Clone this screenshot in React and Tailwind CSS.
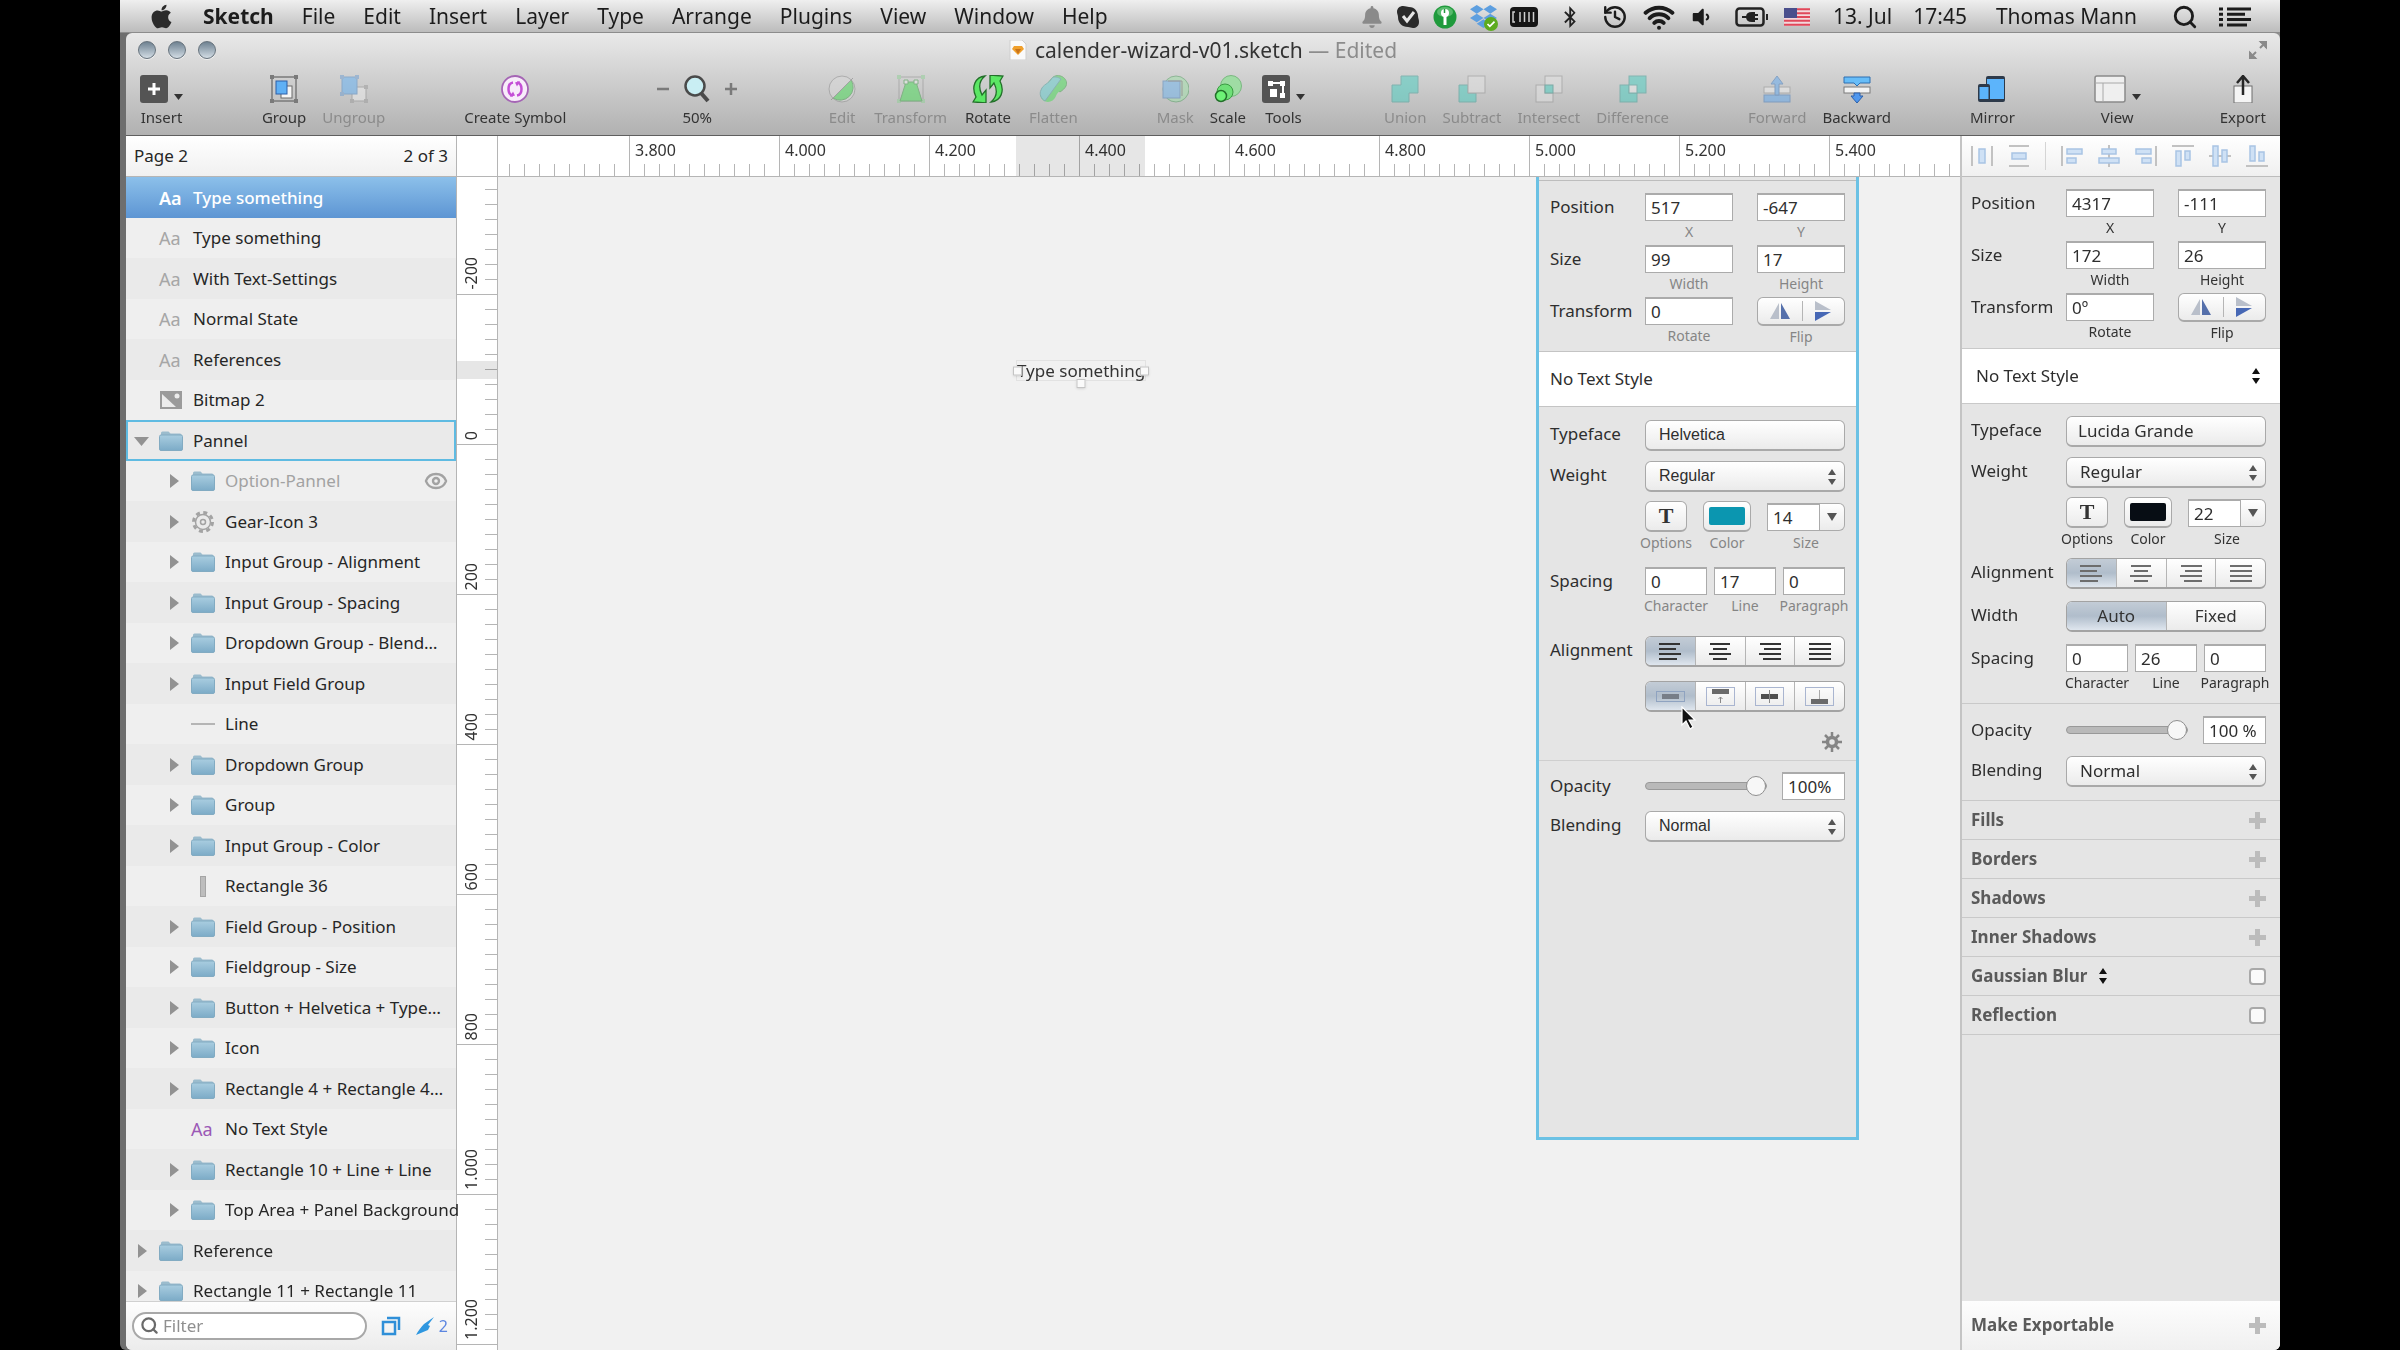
import React from 'react';
import { FaApple, FaBell, FaBluetoothB, FaDropbox, FaVolumeDown } from 'react-icons/fa';
import { Eye, History, Search, Wifi } from 'lucide-react';

const MENUS = ['File', 'Edit', 'Insert', 'Layer', 'Type', 'Arrange', 'Plugins', 'View', 'Window', 'Help'];

const LAYERS = [
    { name: 'Type something', icon: 'text', selected: true },
    { name: 'Type something', icon: 'text' },
    { name: 'With Text-Settings', icon: 'text' },
    { name: 'Normal State', icon: 'text' },
    { name: 'References', icon: 'text' },
    { name: 'Bitmap 2', icon: 'bitmap' },
    { name: 'Pannel', icon: 'folder', arrow: 'down', outlined: true },
    { name: 'Option-Pannel', icon: 'folder', arrow: 'right', nested: true, hidden: true },
    { name: 'Gear-Icon 3', icon: 'gear', arrow: 'right', nested: true },
    { name: 'Input Group - Alignment', icon: 'folder', arrow: 'right', nested: true },
    { name: 'Input Group - Spacing', icon: 'folder', arrow: 'right', nested: true },
    { name: 'Dropdown Group - Blend…', icon: 'folder', arrow: 'right', nested: true },
    { name: 'Input Field Group', icon: 'folder', arrow: 'right', nested: true },
    { name: 'Line', icon: 'line', nested: true },
    { name: 'Dropdown Group', icon: 'folder', arrow: 'right', nested: true },
    { name: 'Group', icon: 'folder', arrow: 'right', nested: true },
    { name: 'Input Group - Color', icon: 'folder', arrow: 'right', nested: true },
    { name: 'Rectangle 36', icon: 'rect', nested: true },
    { name: 'Field Group - Position', icon: 'folder', arrow: 'right', nested: true },
    { name: 'Fieldgroup - Size', icon: 'folder', arrow: 'right', nested: true },
    { name: 'Button + Helvetica + Type…', icon: 'folder', arrow: 'right', nested: true },
    { name: 'Icon', icon: 'folder', arrow: 'right', nested: true },
    { name: 'Rectangle 4 + Rectangle 4…', icon: 'folder', arrow: 'right', nested: true },
    { name: 'No Text Style', icon: 'shared', nested: true },
    { name: 'Rectangle 10 + Line + Line', icon: 'folder', arrow: 'right', nested: true },
    { name: 'Top Area + Panel Background', icon: 'folder', arrow: 'right', nested: true },
    { name: 'Reference', icon: 'folder', arrow: 'right' },
    { name: 'Rectangle 11 + Rectangle 11', icon: 'folder', arrow: 'right' },
];

const H_MARKS = ['3.800', '4.000', '4.200', '4.400', '4.600', '4.800', '5.000', '5.200', '5.400'];
const V_MARKS = ['0', '200', '400', '600', '800', '1.000', '1.200'];

/* ---------- menu bar ---------- */

function MenuBar() {
    return (
        <nav className="flex h-[33px] shrink-0 items-center justify-between border-b border-[#8c8c8c] bg-linear-to-b from-[#efefef] to-[#bcbcbc] pt-px pr-[29px] pl-[28px] text-[21px] text-[#1c1c1c]">
            <div className="flex items-center gap-7">
                <button type="button" aria-label="Apple">
                    <FaApple className="size-[27px] text-[#2b2b2b]" />
                </button>
                <button type="button" className="font-bold">Sketch</button>
                {MENUS.map((menu) => (
                    <button key={menu} type="button">{menu}</button>
                ))}
            </div>
            <div className="flex items-center gap-[15px]">
                <div className="flex items-center gap-[13px]">
                    <FaBell className="size-[22px] text-[#8a8a8a]" />
                    <svg viewBox="0 0 24 24" className="size-[24px]">
                        <path d="M7 1c3 0 4 1 6 1 6 0 9 5 9 9 0 2 1 3 1 6 0 4-3 6-6 6-2 0-3-1-5-1-6 0-10-4-10-10 0-2-1-3-1-5 0-4 3-6 6-6z" fill="#2a2a2a" />
                        <path d="M7 11l4 5 7-9" fill="none" stroke="#e5e5e5" strokeWidth="3" />
                    </svg>
                    <svg viewBox="0 0 24 24" className="size-[24px]">
                        <circle cx="12" cy="12" r="11.5" fill="#1f9a3c" />
                        <ellipse cx="12" cy="7" rx="8" ry="5" fill="#7fd08c" opacity=".6" />
                        <circle cx="12" cy="8" r="4" fill="#fff" />
                        <path d="M10.500 10h3v10h-3z" fill="#fff" />
                        <path d="M11.500 4v4" stroke="#1f9a3c" strokeWidth="1.500" />
                    </svg>
                    <span className="relative">
                        <FaDropbox className="size-[27px] text-[#5d9fe0]" />
                        <svg viewBox="0 0 12 12" className="absolute -right-px -bottom-px size-[14px]">
                            <circle cx="6" cy="6" r="6" fill="#5cab1e" />
                            <path d="M3 6l2 2 4-4" fill="none" stroke="#fff" strokeWidth="1.500" />
                        </svg>
                    </span>
                    <svg viewBox="0 0 28 20" className="h-5 w-7">
                        <rect width="28" height="20" rx="4" fill="#161616" />
                        <path d="M5 5H3v10h2M10 5v10M14.500 5v10M19 5v10M23.500 5v10" fill="none" stroke="#cfcfcf" strokeWidth="1.500" />
                    </svg>
                </div>
                <FaBluetoothB className="mx-[6px] size-[22px] text-[#222]" />
                <History className="size-[26px]" strokeWidth={2.2} />
                <Wifi className="size-[32px]" strokeWidth={3} />
                <FaVolumeDown className="size-[22px]" />
                <svg viewBox="0 0 34 20" className="ml-[8px] h-5 w-[34px]">
                    <rect x="1.500" y="1.500" width="27" height="17" rx="3" fill="none" stroke="#222" strokeWidth="2.500" />
                    <path d="M31 7h2v6h-2z" fill="#222" />
                    <path d="M7 10h5M12 10c0-3 2-4 5-4h2v8h-2c-3 0-5-1-5-4zM19 8h4M19 12h4" fill="#222" stroke="#222" strokeWidth="2" />
                </svg>
                <svg viewBox="0 0 26 18" className="mr-[8px] h-[18px] w-[26px]">
                    <rect width="26" height="18" fill="#f3d9dc" />
                    <path d="M0 1.300h26M0 5.200h26M0 9h26M0 12.800h26M0 16.700h26" stroke="#e0485a" strokeWidth="2" />
                    <rect width="13" height="10" fill="#4a4f8c" />
                </svg>
                <span>13. Jul</span>
                <span className="ml-[6px]">17:45</span>
                <button type="button" className="ml-[14px]">Thomas Mann</button>
                <button type="button" aria-label="Spotlight" className="ml-[20px]">
                    <Search className="size-[26px]" strokeWidth={2.6} />
                </button>
                <button type="button" aria-label="Notification Center" className="ml-[6px]">
                    <svg viewBox="0 0 32 20" className="h-5 w-8">
                        <path d="M0 2h4M8 2h24M0 7.300h4M8 7.300h18M0 12.600h4M8 12.600h24M0 18h4M8 18h20" stroke="#1c1c1c" strokeWidth="3" />
                    </svg>
                </button>
            </div>
        </nav>
    );
}

/* ---------- toolbar ---------- */

const ICONS = {
    insert: (
        <>
            <rect width="28" height="28" rx="3" fill="#545454" />
            <path d="M14 8v12M8 14h12" stroke="#fff" strokeWidth="3" />
        </>
    ),
    group: (
        <>
            <rect x="2" y="2" width="24" height="24" fill="none" stroke="#7a7a7a" strokeWidth="1.500" />
            <path d="M0 0h4v4H0zM24 0h4v4h-4zM0 24h4v4H0zM24 24h4v4h-4z" fill="#7a7a7a" />
            <rect x="11" y="11" width="11" height="12" fill="#f6f6f6" stroke="#6b6b6b" />
            <rect x="6" y="6" width="11" height="13" fill="#5fb0f5" stroke="#2c5fa8" />
        </>
    ),
    ungroup: (
        <>
            <rect x="12" y="12" width="14" height="14" fill="#efefef" stroke="#8a8a8a" />
            <path d="M10 10h4v4h-4zM24 10h4v4h-4zM10 24h4v4h-4zM24 24h4v4h-4z" fill="#9a9a9a" />
            <rect x="2" y="2" width="15" height="17" fill="#5fb0f5" stroke="#4a86c4" />
            <path d="M0 0h4v4H0zM15 0h4v4h-4zM0 17h4v4H0z" fill="#6b9cd0" />
        </>
    ),
    symbol: (
        <>
            <circle cx="14" cy="14" r="13" fill="#f8ecfa" stroke="#a565b5" strokeWidth="1.800" />
            <path d="M12 7.500c-6 1-6 12 0 13M16 20.500c6-1 6-12 0-13" fill="none" stroke="#c44fd6" strokeWidth="2.500" />
            <path d="M9 22l5-1.500-2-4zM19 6l-5 1.500 2 4z" fill="#c44fd6" />
        </>
    ),
    edit: (
        <>
            <circle cx="14" cy="14" r="13" fill="#d9d9d9" stroke="#8a8a8a" />
            <path d="M23 5A13 13 0 0 1 5 23z" fill="#46dc53" stroke="#3a9a42" />
            <path d="M3 25L25 3" stroke="#777" />
        </>
    ),
    transform: (
        <>
            <rect x="2" y="2" width="24" height="24" fill="none" stroke="#8a8a8a" />
            <path d="M0 0h4v4H0zM24 0h4v4h-4zM0 24h4v4H0zM24 24h4v4h-4z" fill="#8fcf95" />
            <path d="M9 7h10l6 19H3z" fill="#46dc53" stroke="#3a9a42" />
            <path d="M7 5h4v4H7zM17 5h4v4h-4z" fill="#eee" stroke="#3a9a42" />
        </>
    ),
    rotate: (
        <g fill="#5be764" stroke="#23702a" strokeWidth="1.300">
            <path d="M13 1C3 2-1 12 4 22l-3 5 13 1V15l-4 5C6 12 7 6 13 1z" />
            <path d="M19 27c10-1 14-11 9-21l3-5-13-1v13l4-5c4 8 3 14-3 19z" />
        </g>
    ),
    flatten: (
        <>
            <path d="M13 3c6-6 17 0 14 8-1 2-3 4-6 6L9 8z" fill="#46dc53" stroke="#3a9a42" />
            <path d="M27 9c-2 6-8 6-10 12-3 8-14 8-16-1l20-17c4 0 6 3 6 6z" fill="#46dc53" />
            <path d="M13 3C10 9 4 9 2 15c-2 4 0 9 4 11L22 4c-3-2-7-3-9-1z" fill="#63cfd0" stroke="#4a9a9a" />
        </>
    ),
    mask: (
        <>
            <circle cx="15" cy="14" r="13" fill="#9fe0a8" stroke="#4a9a5a" />
            <rect x="2" y="6" width="17" height="17" fill="#6db4ee" stroke="#4a7fb8" />
            <path d="M7 6h14v15" fill="none" stroke="#6a6a6a" />
        </>
    ),
    scale: (
        <>
            <circle cx="17" cy="11" r="10.500" fill="#9fdca4" stroke="#7ab880" />
            <circle cx="11" cy="17" r="8" fill="#6ee077" stroke="#3a9a42" />
            <circle cx="7" cy="21" r="5.500" fill="#6df376" stroke="#23702a" strokeWidth="1.500" />
        </>
    ),
    tools: (
        <>
            <rect width="28" height="28" rx="3" fill="#545454" />
            <path d="M9 8h12v12" fill="none" stroke="#fff" strokeWidth="2" />
            <path d="M6 6h5v5H6zM18 6h5v5h-5zM18 18h5v5h-5zM8 14h7v8H8z" fill="#fff" />
        </>
    ),
    union: <path d="M10 1h17v17h-9v9H1V10h9z" fill="#46cdc0" stroke="#3a9a92" />,
    subtract: (
        <>
            <path d="M1 10h9v8h8v9H1z" fill="#46cdc0" stroke="#3a9a92" />
            <rect x="10" y="1" width="17" height="17" fill="#e2e2e2" stroke="#8f8f8f" />
        </>
    ),
    intersect: (
        <>
            <rect x="1" y="10" width="17" height="17" fill="#e2e2e2" stroke="#8f8f8f" />
            <rect x="10" y="1" width="17" height="17" fill="#e2e2e2" stroke="#8f8f8f" />
            <rect x="10" y="10" width="8" height="8" fill="#46cdc0" stroke="#2f8880" />
        </>
    ),
    difference: (
        <>
            <rect x="1" y="10" width="17" height="17" fill="#46cdc0" stroke="#3a9a92" />
            <rect x="10" y="1" width="17" height="17" fill="#46cdc0" stroke="#3a9a92" />
            <rect x="10" y="10" width="8" height="8" fill="#ececec" stroke="#3a9a92" />
        </>
    ),
    forward: (
        <>
            <rect x="1" y="20" width="26" height="7" fill="#5fa8f0" stroke="#3f76b8" />
            <rect x="1" y="12" width="26" height="6" fill="#f0f0f0" stroke="#8f8f8f" />
            <path d="M14 1l6 8h-4v11h-4V9H8z" fill="#5fa8f0" stroke="#3f76b8" />
        </>
    ),
    backward: (
        <>
            <path d="M1 2h26v6H17l-3 3-3-3H1z" fill="#67bdf8" stroke="#2f6fb0" />
            <rect x="1" y="12" width="26" height="6" fill="#f4f4f4" stroke="#7a7a7a" />
            <path d="M11 18h6v3h3l-6 7-6-7h3z" fill="#4f97ee" stroke="#2c5fa8" />
        </>
    ),
    mirror: (
        <>
            <rect x="8" y="1" width="19" height="26" rx="2" fill="#2e3a4a" />
            <rect x="9" y="4" width="17" height="20" fill="#5cb4fb" />
            <rect x="0" y="9" width="12" height="18" rx="2" fill="#2e3a4a" />
            <rect x="1.500" y="12" width="9" height="12" fill="#5cb4fb" />
        </>
    ),
    view: (
        <>
            <rect x="1" y="1" width="30" height="26" rx="2" fill="#efefef" stroke="#8a8a8a" strokeWidth="1.500" />
            <path d="M1 8h30M9 8v19" stroke="#a8a8a8" />
        </>
    ),
    export: (
        <>
            <rect x="5" y="11" width="18" height="17" fill="#f4f4f4" stroke="#6e6e6e" />
            <path d="M14 20V1M8 8l6-7 6 7" fill="none" stroke="#262626" strokeWidth="2.500" />
        </>
    ),
};

const TOOL_GROUPS = [
    [{ label: 'Insert', icon: 'insert', menu: true }],
    [{ label: 'Group', icon: 'group' }, { label: 'Ungroup', icon: 'ungroup', off: true }],
    [{ label: 'Create Symbol', icon: 'symbol' }],
    'zoom',
    [
        { label: 'Edit', icon: 'edit', off: true },
        { label: 'Transform', icon: 'transform', off: true },
        { label: 'Rotate', icon: 'rotate', wide: true },
        { label: 'Flatten', icon: 'flatten', off: true },
    ],
    [
        { label: 'Mask', icon: 'mask', off: true },
        { label: 'Scale', icon: 'scale' },
        { label: 'Tools', icon: 'tools', menu: true },
    ],
    [
        { label: 'Union', icon: 'union', off: true },
        { label: 'Subtract', icon: 'subtract', off: true },
        { label: 'Intersect', icon: 'intersect', off: true },
        { label: 'Difference', icon: 'difference', off: true },
    ],
    [{ label: 'Forward', icon: 'forward', off: true }, { label: 'Backward', icon: 'backward' }],
    [{ label: 'Mirror', icon: 'mirror' }],
    [{ label: 'View', icon: 'view', menu: true, wide: true }],
    [{ label: 'Export', icon: 'export' }],
];

function ToolButton({ label, icon, off, menu, wide }) {
    return (
        <button type="button" disabled={off} className="flex flex-col items-center gap-1">
            <span className={off ? 'flex items-end gap-[6px] opacity-50' : 'flex items-end gap-[6px]'}>
                <svg viewBox={wide ? '0 0 32 28' : '0 0 28 28'} className={wide ? 'h-7 w-8' : 'size-7'}>
                    {ICONS[icon]}
                </svg>
                {menu && (
                    <svg viewBox="0 0 9 12" className="h-3 w-[9px]">
                        <path d="M0 3h9l-4.500 6z" fill="#333" />
                    </svg>
                )}
            </span>
            <span className={off ? 'leading-5 text-[#8b8b8b]' : 'leading-5 text-[#333]'}>{label}</span>
        </button>
    );
}

function ZoomControl() {
    return (
        <div className="mx-[12px] flex flex-col items-center gap-1">
            <div className="flex items-center gap-[14px] text-[#7a7a7a]">
                <button type="button" aria-label="Zoom out">
                    <svg viewBox="0 0 12 12" className="size-3">
                        <path d="M0 6h12" stroke="currentColor" strokeWidth="2.500" />
                    </svg>
                </button>
                <svg viewBox="0 0 28 28" className="size-7">
                    <circle cx="12" cy="11" r="9.500" fill="#c9eef3" stroke="#4a4a4a" strokeWidth="2.500" />
                    <path d="M18 18l7 8" stroke="#4a4a4a" strokeWidth="4" />
                </svg>
                <button type="button" aria-label="Zoom in">
                    <svg viewBox="0 0 12 12" className="size-3">
                        <path d="M0 6h12M6 0v12" stroke="currentColor" strokeWidth="2.500" />
                    </svg>
                </button>
            </div>
            <span className="leading-5 text-[#333]">50%</span>
        </div>
    );
}

function WindowHeader() {
    const light = 'size-[18px] rounded-full border border-[#66727c] bg-linear-to-b from-[#6f8291] to-[#d3dde5] shadow-[0_1px_0_#f2f2f2]';
    return (
        <header className="shrink-0 rounded-t-md border-b border-[#5f5f5f] bg-linear-to-b from-[#e9e9e9] to-[#b1b1b1]">
            <div className="grid h-[42px] grid-cols-[1fr_auto_1fr] items-center px-3 pb-2">
                <div className="flex gap-3">
                    <button type="button" aria-label="Close" className={light} />
                    <button type="button" aria-label="Minimize" className={light} />
                    <button type="button" aria-label="Zoom" className={light} />
                </div>
                <h1 className="flex items-center gap-2 text-[21px] leading-7 text-[#333]">
                    <svg viewBox="0 0 18 20" className="h-5 w-[18px]">
                        <path d="M1 0h12l4 4v16H1z" fill="#fafafa" stroke="#cfcfcf" />
                        <path d="M5 6h8l2 3-6 6-6-6z" fill="#f0a02c" />
                        <path d="M6 9h6l-3 5z" fill="#c9741a" />
                    </svg>
                    <span>
                        calender-wizard-v01.sketch <span className="text-[#8c8c8c]">— Edited</span>
                    </span>
                </h1>
                <button type="button" aria-label="Full screen" className="justify-self-end">
                    <svg viewBox="0 0 20 20" className="size-5" stroke="#8a8a8a" strokeWidth="2" fill="#8a8a8a">
                        <path d="M12 8l6-6M12 2h6v6M8 12l-6 6M2 12v6h6" fill="none" />
                        <path d="M13 2h5v5zM2 13v5h5z" />
                    </svg>
                </button>
            </div>
            <div className="flex items-start justify-between px-[14px] pb-2 text-[15px]">
                {TOOL_GROUPS.map((group, index) =>
                    group === 'zoom' ? (
                        <ZoomControl key="zoom" />
                    ) : (
                        <div key={index} className={index === 4 ? 'flex gap-[18px]' : 'flex gap-4'}>
                            {group.map((tool) => (
                                <ToolButton key={tool.label} {...tool} />
                            ))}
                        </div>
                    )
                )}
            </div>
        </header>
    );
}

/* ---------- layer list ---------- */

function LayerIcon({ type, selected }) {
    if (type === 'text' || type === 'shared') {
        const color = selected ? 'text-white font-semibold' : type === 'shared' ? 'text-[#9b59b6]' : 'text-[#a6a6a6]';
        return <span className={`w-6 text-[18px] leading-6 ${color}`}>Aa</span>;
    }
    if (type === 'folder') {
        return (
            <svg viewBox="0 0 24 20" className="h-5 w-6">
                <defs>
                    <linearGradient id="folder" x1="0" y1="0" x2="0" y2="1">
                        <stop offset="0" stopColor="#a9cde0" />
                        <stop offset="1" stopColor="#7cabc7" />
                    </linearGradient>
                </defs>
                <path d="M2 5V2q0-1.500 1.500-1.500h6L11.500 2.500H21Q22.500 2.500 22.500 4v2z" fill="#9bbccd" />
                <rect x=".5" y="4" width="23" height="15.500" rx="1.500" fill="url(#folder)" stroke="#82abc2" />
            </svg>
        );
    }
    if (type === 'bitmap') {
        return (
            <svg viewBox="0 0 24 20" className="h-5 w-6">
                <rect x="1" y="1" width="22" height="18" fill="#9b9b9b" />
                <path d="M3 4l14 13H3z" fill="#ececec" />
                <circle cx="18" cy="6" r="2.500" fill="#ececec" />
            </svg>
        );
    }
    if (type === 'gear') {
        return (
            <svg viewBox="0 0 24 24" className="size-6" fill="none" stroke="#a3a3a3">
                <circle cx="12" cy="12" r="9.500" strokeWidth="3" strokeDasharray="4 3.460" />
                <circle cx="12" cy="12" r="7.500" strokeWidth="1.500" fill="#ebebeb" />
                <circle cx="12" cy="12" r="2.500" strokeWidth="1.500" />
            </svg>
        );
    }
    if (type === 'line') {
        return <span className="h-[2px] w-6 bg-[#b5b5b5]" />;
    }
    return (
        <span className="flex w-6 justify-center">
            <span className="h-[21px] w-[6px] border border-[#a5a5a5] bg-[#bdbdbd]" />
        </span>
    );
}

function LayerRow({ name, icon, arrow, nested, selected, outlined, hidden }) {
    const state = selected
        ? 'bg-linear-to-b from-[#8cc0ea] to-[#5d95d3] text-white font-medium'
        : outlined
            ? 'bg-[#eaeaea] outline-2 -outline-offset-2 outline-[#5fbbe2]'
            : 'even:bg-[#efefef] odd:bg-[#eaeaea]';
    return (
        <li className={`flex shrink-0 items-center odd:h-[41px] even:h-[40px] ${nested ? 'pl-[40px]' : 'pl-2'} ${state}`}>
            <span className="flex w-[25px] shrink-0">
                {arrow && (
                    <svg viewBox="0 0 16 16" className="size-4">
                        <path d={arrow === 'down' ? 'M0 4h15l-7.500 9z' : 'M4 1l9 7-9 7z'} fill="#929292" />
                    </svg>
                )}
            </span>
            <span className="flex shrink-0 items-center">
                <LayerIcon type={icon} selected={selected} />
            </span>
            <span className={`grow pl-[10px] whitespace-nowrap ${hidden ? 'text-[#a2a2a2]' : ''}`}>{name}</span>
            {hidden && <Eye className="mr-2 size-6 text-[#a2a2a2]" strokeWidth={2.4} />}
        </li>
    );
}

function LayerList() {
    return (
        <aside className="relative z-10 flex w-[331px] shrink-0 flex-col border-r border-[#b5b5b5] bg-[#efefef] text-[17px] text-[#262626]">
            <div className="flex h-[41px] shrink-0 items-center justify-between border-b border-[#b5b5b5] bg-linear-to-b from-white to-[#f0f0f0] px-2">
                <span>Page 2</span>
                <span>2 of 3</span>
            </div>
            <ul className="flex min-h-0 grow flex-col overflow-x-visible overflow-y-clip">
                {LAYERS.map((layer, index) => (
                    <LayerRow key={index} {...layer} />
                ))}
            </ul>
            <div className="flex h-[49px] shrink-0 items-center gap-[14px] border-t border-[#d0d0d0] bg-linear-to-b from-[#fdfdfd] to-[#ececec] pr-[8px] pb-px pl-[6px]">
                <label className="flex h-7 min-w-0 grow items-center gap-1 rounded-full border-2 border-[#a8a8a8] bg-white px-[6px]">
                    <Search className="size-[19px] shrink-0 text-[#6a6a6a]" strokeWidth={2.8} />
                    <input type="text" placeholder="Filter" aria-label="Filter" className="w-full min-w-0 outline-none placeholder:text-[#8f8f8f]" />
                </label>
                <button type="button" aria-label="Show slices">
                    <svg viewBox="0 0 20 20" className="size-5" fill="none" stroke="#2f8fd8" strokeWidth="2.500">
                        <rect x="2" y="6" width="12" height="12" />
                        <path d="M6 2h12v12" />
                    </svg>
                </button>
                <button type="button" className="flex items-center gap-1 text-[16px] text-[#5c86e0]">
                    <svg viewBox="0 0 20 20" className="size-5">
                        <path d="M19 1L9 8c-3 3-6 7-8 11l12-5 2-4-2-1z" fill="#2f97e0" />
                    </svg>
                    2
                </button>
            </div>
        </aside>
    );
}

/* ---------- rulers ---------- */

function HorizontalRuler() {
    return (
        <div className="relative flex h-[41px] shrink-0 overflow-hidden border-b border-[#b5b5b5] bg-white">
            <div className="flex w-[131px] shrink-0 items-end justify-end overflow-hidden">
                {Array.from({ length: 9 }, (_, i) => (
                    <span key={i} className="h-3 w-[15px] shrink-0 border-l border-[#b5b5b5]" />
                ))}
            </div>
            {H_MARKS.map((mark) => (
                <div key={mark} className="grid w-[150px] shrink-0 grid-rows-[40px]">
                    <div className="flex items-end [grid-area:1/1]">
                        {Array.from({ length: 10 }, (_, i) => (
                            <span key={i} className={`w-[15px] border-l border-[#b5b5b5] ${i === 0 ? 'h-full' : 'h-3'}`} />
                        ))}
                    </div>
                    <span className="pt-1 pl-[6px] text-[16px] leading-5 text-[#333] [grid-area:1/1]">{mark}</span>
                </div>
            ))}
            <span className="absolute inset-y-0 left-[518px] w-[129px] bg-[#e6e6e6] mix-blend-multiply" />
        </div>
    );
}

function VerticalSegment({ mark, first }) {
    return (
        <div className={`grid shrink-0 grid-cols-[40px] overflow-hidden ${first ? 'h-[118px]' : 'h-[150px]'}`}>
            <div className="flex flex-col items-end justify-end overflow-hidden [grid-area:1/1]">
                {Array.from({ length: 10 }, (_, i) => (
                    <span key={i} className={`h-[15px] shrink-0 border-b border-[#b5b5b5] ${i === 9 ? 'w-full' : 'w-3'}`} />
                ))}
            </div>
            <span className="mb-[5px] ml-[2px] rotate-180 self-end justify-self-start text-[16px] leading-6 text-[#333] [grid-area:1/1] [writing-mode:vertical-rl]">
                {mark}
            </span>
        </div>
    );
}

function VerticalRuler() {
    return (
        <div className="flex w-[41px] shrink-0 flex-col border-r border-[#b5b5b5] bg-white">
            <div className="h-[41px] shrink-0 border-b border-[#b5b5b5]" />
            <div className="relative flex min-h-0 grow flex-col overflow-hidden">
                <VerticalSegment mark="-200" first />
                {V_MARKS.map((mark) => (
                    <VerticalSegment key={mark} mark={mark} />
                ))}
                <span className="absolute inset-x-0 top-[184px] h-[18px] bg-[#e6e6e6] mix-blend-multiply" />
            </div>
        </div>
    );
}

/* ---------- inspector controls ---------- */

function Row({ label, htmlFor, className = '', children }) {
    return (
        <div className={`flex items-start ${className}`}>
            <label htmlFor={htmlFor} className="w-[95px] shrink-0 leading-7 whitespace-nowrap">{label}</label>
            <div className="flex min-w-0 grow items-start justify-between">{children}</div>
        </div>
    );
}

function Caption({ children, mock }) {
    return <span className={`text-[14px] leading-[22px] ${mock ? 'text-[#858585]' : 'text-[#333]'}`}>{children}</span>;
}

function Field({ id, value, caption, mock, size = 'w-[88px]' }) {
    return (
        <div className={`flex flex-col items-center ${size}`}>
            <input
                id={id}
                type="text"
                aria-label={caption || id}
                defaultValue={value}
                className="h-[28px] w-full border border-t-2 border-[#ababab] bg-white px-[5px] text-[17px] outline-none"
            />
            {caption && <Caption mock={mock}>{caption}</Caption>}
        </div>
    );
}

function Stepper({ className = '' }) {
    return (
        <svg viewBox="0 0 8 18" className={`pointer-events-none h-[18px] w-2 ${className}`} fill="currentColor">
            <path d="M4 1l4 6H0zM4 17l4-6H0z" />
        </svg>
    );
}

const PILL = 'h-[31px] rounded-md border border-b-2 border-[#a9a9a9] bg-linear-to-b from-white to-[#ebebeb]';

function Dropdown({ id, value, mock }) {
    return (
        <div className="grid w-full items-center">
            <select id={id} className={`${PILL} w-full appearance-none pl-[13px] [grid-area:1/1] ${mock ? 'font-["Liberation_Sans",sans-serif] text-[16px]' : ''}`}>
                <option>{value}</option>
            </select>
            <Stepper className="mr-[9px] justify-self-end text-[#555] [grid-area:1/1]" />
        </div>
    );
}

function FlipButtons({ mock }) {
    return (
        <div className="flex w-[88px] flex-col items-center">
            <div className="flex h-[29px] w-full items-center rounded-md border border-b-2 border-[#a9a9a9] bg-linear-to-b from-white to-[#ebebeb]">
                <button type="button" aria-label="Flip horizontal" className="flex grow justify-center">
                    <svg viewBox="0 0 20 18" className="h-[18px] w-5">
                        <path d="M9 1v16H0z" fill="#b9bfca" />
                        <path d="M11 1v16h9z" fill="#5570ab" />
                    </svg>
                </button>
                <span className="h-5 w-px bg-[#b5b5b5]" />
                <button type="button" aria-label="Flip vertical" className="flex grow justify-center">
                    <svg viewBox="0 0 18 20" className="h-5 w-[18px]">
                        <path d="M1 9V0l16 9z" fill="#b9bfca" />
                        <path d="M1 11v9l16-9z" fill="#4768b5" />
                    </svg>
                </button>
            </div>
            <Caption mock={mock}>Flip</Caption>
        </div>
    );
}

const LINES = {
    left: 'M0 2h21M0 7h17M0 12h22M0 17h18',
    center: 'M1 2h20M4 7h14M0 12h22M4 17h14',
    right: 'M1 2h21M5 7h17M0 12h22M4 17h18',
    justify: 'M0 2h22M0 7h22M0 12h22M0 17h22',
};

const SEGMENT_ON = 'bg-linear-to-b from-[#c3ccd6] via-[#b0bdcb] to-[#dfe6ee]';

function Segments({ items, render, mock }) {
    return (
        <div className="flex h-[31px] w-full overflow-hidden rounded-md border border-b-2 border-[#a3a3a3] bg-linear-to-b from-white to-[#ebebeb]">
            {items.map((item, index) => (
                <button
                    key={item}
                    type="button"
                    aria-label={item}
                    className={`flex flex-1 items-center justify-center border-[#b5b5b5] not-first:border-l ${index === 0 ? SEGMENT_ON : ''} ${mock ? 'text-[#333]' : 'text-[#6d6d6d]'}`}
                >
                    {render(item)}
                </button>
            ))}
        </div>
    );
}

function AlignLines({ type }) {
    return (
        <svg viewBox="0 0 22 19" className="h-[19px] w-[22px]">
            <path d={LINES[type]} stroke="currentColor" strokeWidth="2" />
        </svg>
    );
}

const BOXES = {
    none: (
        <>
            <rect x=".5" y="4.500" width="28" height="10" fill="none" stroke="#8fa3c0" />
            <path d="M6 7h17v5H6z" fill="#777e88" />
        </>
    ),
    top: (
        <>
            <rect x=".5" y=".5" width="28" height="18" fill="none" stroke="#a9b5d0" />
            <path d="M6 2h17v5H6z" fill="#6a6a6a" />
            <path d="M14.500 10v6M12.500 12l2-2 2 2" stroke="#888" fill="none" />
        </>
    ),
    middle: (
        <>
            <rect x=".5" y=".5" width="28" height="18" fill="none" stroke="#a9b5d0" />
            <path d="M6 7h17v5H6z" fill="#505050" />
            <path d="M14.500 3v13" stroke="#888" />
        </>
    ),
    bottom: (
        <>
            <rect x=".5" y=".5" width="28" height="18" fill="none" stroke="#a9b5d0" />
            <path d="M6 12h17v5H6z" fill="#6a6a6a" />
            <path d="M14.500 3v9" stroke="#aaa" />
        </>
    ),
};

function BoxAlign({ type }) {
    return <svg viewBox="0 0 29 19" className="h-[19px] w-[29px]">{BOXES[type]}</svg>;
}

function TextControls({ size, color, mock }) {
    return (
        <>
            <div className="flex w-[42px] flex-col items-center">
                <button type="button" aria-label="Text options" className={`${PILL} w-full font-["Liberation_Serif",serif] text-[22px] leading-6 font-bold text-[#333]`}>
                    T
                </button>
                <Caption mock={mock}>Options</Caption>
            </div>
            <div className="flex w-[48px] flex-col items-center">
                <button type="button" aria-label="Text color" className={`${PILL} w-full p-[5px]`}>
                    <span className={`block h-full rounded-xs ${color}`} />
                </button>
                <Caption mock={mock}>Color</Caption>
            </div>
            <div className="flex w-[78px] flex-col items-center">
                <div className="flex h-[31px] w-full items-center">
                    <input type="text" aria-label="Font size" defaultValue={size} className="h-[28px] w-[53px] border border-t-2 border-[#ababab] bg-white px-[5px] outline-none" />
                    <button type="button" aria-label="Font sizes" className="flex h-[28px] grow items-center justify-center rounded-r-md border border-l-0 border-[#ababab] bg-linear-to-b from-white to-[#ebebeb]">
                        <svg viewBox="0 0 10 8" className="h-2 w-[10px]">
                            <path d="M0 0h10L5 8z" fill="#555" />
                        </svg>
                    </button>
                </div>
                <Caption mock={mock}>Size</Caption>
            </div>
        </>
    );
}

function OpacityRow({ id, value }) {
    return (
        <Row label="Opacity" htmlFor={id}>
            <div className="flex h-[28px] items-center">
                <input
                    id={id}
                    type="range"
                    defaultValue={100}
                    className="h-[8px] w-[122px] appearance-none rounded-full border border-[#999] bg-[#b9b9b9] [&::-webkit-slider-thumb]:size-[20px] [&::-webkit-slider-thumb]:appearance-none [&::-webkit-slider-thumb]:rounded-full [&::-webkit-slider-thumb]:border [&::-webkit-slider-thumb]:border-[#8f8f8f] [&::-webkit-slider-thumb]:bg-[#f7f7f7]"
                />
            </div>
            <Field id={`${id}-value`} value={value} size="w-[63px]" />
        </Row>
    );
}

function Geometry({ id, values, mock }) {
    const [x, y, width, height, rotate] = values;
    return (
        <div className={`flex flex-col gap-[2px] pt-3 ${mock ? 'pr-[11px] pb-[3px] pl-[11px]' : 'pr-[14px] pb-1 pl-[9px]'}`}>
            <Row label="Position" htmlFor={`${id}-x`}>
                <Field id={`${id}-x`} value={x} caption="X" mock={mock} />
                <Field id={`${id}-y`} value={y} caption="Y" mock={mock} />
            </Row>
            <Row label="Size" htmlFor={`${id}-w`}>
                <Field id={`${id}-w`} value={width} caption="Width" mock={mock} />
                <Field id={`${id}-h`} value={height} caption="Height" mock={mock} />
            </Row>
            <Row label="Transform" htmlFor={`${id}-r`}>
                <Field id={`${id}-r`} value={rotate} caption="Rotate" mock={mock} />
                <FlipButtons mock={mock} />
            </Row>
        </div>
    );
}

function Spacing({ id, line, mock, className }) {
    return (
        <Row label="Spacing" htmlFor={`${id}-character`} className={className}>
            <Field id={`${id}-character`} value="0" caption="Character" mock={mock} size="w-[62px]" />
            <Field id={`${id}-line`} value={line} caption="Line" mock={mock} size="w-[62px]" />
            <Field id={`${id}-paragraph`} value="0" caption="Paragraph" mock={mock} size="w-[62px]" />
        </Row>
    );
}

/* ---------- canvas ---------- */

function MockPanel() {
    return (
        <div className="absolute top-0 left-[1038px] w-[323px] border-x-3 border-b-3 border-[#6bc1e4] bg-[#e5e5e5] pt-[3px] pb-[295px] text-[17px] text-[#2e2e2e]">
            <div className="border-t border-[#bdbdbd]">
                <Geometry id="mock" values={['517', '-647', '99', '17', '0']} mock />
            </div>
            <div className="flex h-14 items-center border-y border-[#c4c4c4] bg-white px-[11px]">No Text Style</div>
            <div className="flex flex-col pt-[13px] pr-[11px] pl-[11px]">
                <Row label="Typeface" htmlFor="mock-typeface">
                    <button id="mock-typeface" type="button" className={`${PILL} w-full pl-[13px] text-left font-["Liberation_Sans",sans-serif] text-[16px]`}>
                        Helvetica
                    </button>
                </Row>
                <Row label="Weight" htmlFor="mock-weight" className="mt-[10px]">
                    <Dropdown id="mock-weight" value="Regular" mock />
                </Row>
                <Row className="mt-[9px]">
                    <TextControls size="14" color="bg-[#0b96b0]" mock />
                </Row>
                <Spacing id="mock" line="17" mock className="mt-[13px]" />
                <Row label="Alignment" className="mt-[19px]">
                    <Segments items={['left', 'center', 'right', 'justify']} render={(item) => <AlignLines type={item} />} mock />
                </Row>
                <Row className="mt-[14px]">
                    <Segments items={['none', 'top', 'middle', 'bottom']} render={(item) => <BoxAlign type={item} />} mock />
                </Row>
                <button type="button" aria-label="Settings" className="mt-[20px] mb-[8px] self-end pr-[3px]">
                    <svg viewBox="0 0 20 20" className="size-5" fill="none" stroke="#858585">
                        <path d="M10 0v20M0 10h20M3 3l14 14M17 3L3 17" strokeWidth="2.500" />
                        <circle cx="10" cy="10" r="4.500" strokeWidth="3.500" fill="#e5e5e5" />
                    </svg>
                </button>
            </div>
            <div className="flex flex-col gap-[11px] border-t border-[#cfcfcf] pt-[11px] pr-[11px] pl-[11px]">
                <OpacityRow id="mock-opacity" value="100%" />
                <Row label="Blending" htmlFor="mock-blending">
                    <Dropdown id="mock-blending" value="Normal" mock />
                </Row>
            </div>
        </div>
    );
}

function Canvas() {
    const handle = 'absolute size-[9px] border border-[#c4c4c4] bg-[#fafafa] shadow-sm';
    return (
        <main className="flex min-w-0 grow flex-col">
            <HorizontalRuler />
            <div className="relative min-h-0 grow overflow-hidden bg-[#f1f1f1]">
                <div className="absolute top-[183px] left-[518px] border border-[#e2e2e2] text-[17px] leading-[19px] whitespace-nowrap text-[#333]">
                    Type something
                    <span className={`${handle} top-1/2 -left-1 -translate-y-1/2`} />
                    <span className={`${handle} top-1/2 -right-1 -translate-y-1/2`} />
                    <span className={`${handle} -bottom-2 left-1/2 -translate-x-1/2`} />
                </div>
                <MockPanel />
                <svg viewBox="0 0 16 24" className="absolute top-[529px] left-[1183px] h-6 w-4">
                    <path d="M1 1v18l4-4 4 8 3-2-4-7h6z" fill="#111" stroke="#fff" strokeWidth="1.200" />
                </svg>
            </div>
        </main>
    );
}

/* ---------- right inspector ---------- */

const ALIGN_ICONS = [
    { name: 'Distribute horizontally', gray: 'M1 1v20M21 1v20', blue: 'M8 4h6v14H8z' },
    { name: 'Distribute vertically', gray: 'M1 1h20M1 21h20', blue: 'M4 8h14v6H4z' },
    { name: 'Align left', gray: 'M1 1v20', blue: 'M6 4h15v5H6zM6 13h9v5H6z' },
    { name: 'Align center', gray: 'M11 0v22', blue: 'M4 4h14v5H4zM1 13h20v5H1z' },
    { name: 'Align right', gray: 'M21 1v20', blue: 'M1 4h15v5H1zM7 13h9v5H7z' },
    { name: 'Align top', gray: 'M0 1h22', blue: 'M4 6h5v15H4zM13 6h5v9h-5z' },
    { name: 'Align middle', gray: 'M0 11h22', blue: 'M4 1h5v20H4zM13 5h5v12h-5z' },
    { name: 'Align bottom', gray: 'M0 21h22', blue: 'M4 1h5v15H4zM13 7h5v9h-5z' },
];

function Plus() {
    return (
        <svg viewBox="0 0 17 17" className="size-[17px]">
            <path d="M0 8.500h17M8.500 0v17" stroke="#bcbcbc" strokeWidth="5" />
        </svg>
    );
}

function Inspector() {
    return (
        <aside className="flex w-[320px] shrink-0 flex-col border-l-2 border-[#c4c4c4] bg-[#e5e5e5] text-[17px] text-[#2e2e2e]">
            <div className="flex h-[41px] shrink-0 items-center justify-between border-b border-[#bdbdbd] bg-linear-to-b from-white to-[#f0f0f0] pr-3 pl-[9px]">
                {ALIGN_ICONS.map(({ name, gray, blue }, index) => (
                    <React.Fragment key={name}>
                        <button type="button" aria-label={name}>
                            <svg viewBox="0 0 22 22" className="size-[22px]">
                                <path d={gray} stroke="#c2c2c2" strokeWidth="2" />
                                <path d={blue} fill="#cfe1f5" stroke="#a9c4e4" strokeWidth="1.500" />
                            </svg>
                        </button>
                        {index === 1 && <span className="h-7 w-px bg-[#d5d5d5]" />}
                    </React.Fragment>
                ))}
            </div>
            <Geometry id="layer" values={['4317', '-111', '172', '26', '0º']} />
            <button type="button" className="flex h-14 items-center justify-between border-y border-[#c9c9c9] bg-white pr-5 pl-[14px]">
                No Text Style
                <Stepper className="text-[#111]" />
            </button>
            <div className="flex flex-col pt-3 pr-[14px] pb-[9px] pl-[9px]">
                <Row label="Typeface" htmlFor="typeface">
                    <button id="typeface" type="button" className={`${PILL} w-full pl-[11px] text-left`}>Lucida Grande</button>
                </Row>
                <Row label="Weight" htmlFor="weight" className="mt-[10px]">
                    <Dropdown id="weight" value="Regular" />
                </Row>
                <Row className="mt-[9px]">
                    <TextControls size="22" color="bg-[#070d14]" />
                </Row>
                <Row label="Alignment" className="mt-[8px]">
                    <Segments items={['left', 'center', 'right', 'justify']} render={(item) => <AlignLines type={item} />} />
                </Row>
                <Row label="Width" className="mt-[12px]">
                    <Segments items={['Auto', 'Fixed']} render={(item) => item} mock />
                </Row>
                <Spacing id="layer" line="26" className="mt-3" />
            </div>
            <div className="flex flex-col gap-3 border-t border-[#c9c9c9] pt-3 pr-[14px] pb-[13px] pl-[9px]">
                <OpacityRow id="opacity" value="100 %" />
                <Row label="Blending" htmlFor="blending">
                    <Dropdown id="blending" value="Normal" />
                </Row>
            </div>
            <div className="border-b border-[#c9c9c9] font-bold text-[#5a5a5a]">
                {['Fills', 'Borders', 'Shadows', 'Inner Shadows'].map((name) => (
                    <div key={name} className="flex h-[39px] items-center justify-between border-t border-[#c9c9c9] pr-[14px] pl-[9px]">
                        {name}
                        <button type="button" aria-label={`Add ${name}`}><Plus /></button>
                    </div>
                ))}
                {['Gaussian Blur', 'Reflection'].map((name) => (
                    <label key={name} className="flex h-[39px] items-center border-t border-[#c9c9c9] pr-[14px] pl-[9px]">
                        {name}
                        {name === 'Gaussian Blur' && <Stepper className="ml-3 text-[#111]" />}
                        <input type="checkbox" className="ml-auto size-[17px] appearance-none rounded-sm border-2 border-[#a9a9a9] bg-[#fafafa]" />
                    </label>
                ))}
            </div>
            <div className="mt-auto flex h-[49px] shrink-0 items-center justify-between bg-linear-to-b from-[#fdfdfd] to-[#f0f0f0] pr-[14px] pb-px pl-[9px] font-bold text-[#5a5a5a]">
                Make Exportable
                <button type="button" aria-label="Make exportable"><Plus /></button>
            </div>
        </aside>
    );
}

export default function App() {
    return (
        <div className='flex h-screen flex-col overflow-hidden bg-black px-[5%] font-["Noto_Sans",sans-serif]'>
            <MenuBar />
            <div className="flex min-h-0 grow flex-col rounded-b-md bg-linear-to-r from-[#6e6e6e] to-[#8e8e8e] pl-[6px]">
                <div className="flex min-h-0 grow flex-col overflow-hidden rounded-b-md">
                    <WindowHeader />
                    <div className="flex min-h-0 grow">
                        <LayerList />
                        <VerticalRuler />
                        <Canvas />
                        <Inspector />
                    </div>
                </div>
            </div>
        </div>
    );
}
